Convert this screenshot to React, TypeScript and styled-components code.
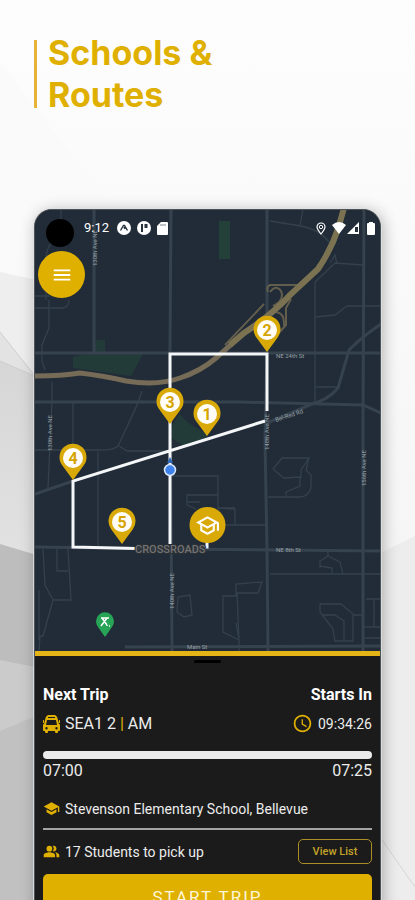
import React from "react";
import styled, { createGlobalStyle } from "styled-components";
import { MdSchool, MdOutlineSchool, MdPeopleAlt, MdAccessTime, MdMenu } from "react-icons/md";

const gold = "#e0b000";

const GlobalStyle = createGlobalStyle`
  * { box-sizing: border-box; }
  body { margin: 0; background: #fafafa; font-family: Roboto, "Liberation Sans", sans-serif; }
  button { font-family: inherit; cursor: pointer; }
`;

const Page = styled.main`
  position: relative;
  height: 100vh;
  overflow: hidden;
  padding: 32px 34px 0;
`;

const Backdrop = styled.svg`
  position: absolute;
  inset: 0;
  width: 100%;
  height: 100%;
`;

const Heading = styled.h1`
  position: relative;
  display: flex;
  align-items: center;
  gap: 11px;
  margin: 0 0 93px;
  color: ${gold};
  font: 700 34px/42px Inter, "Open Sans", sans-serif;

  &::before {
    content: "";
    width: 3px;
    height: 68px;
    background: #e6b238;
  }
`;

const Phone = styled.section`
  position: relative;
  overflow: hidden;
  border: 1px solid #4c5359;
  border-bottom: 0;
  border-radius: 18px 18px 0 0;
  background: #1b1b1b;
  box-shadow: 0 0 0 1px rgba(225, 225, 225, 0.8), 2px 2px 16px rgba(0, 0, 0, 0.3);
`;

const MapArea = styled.div`
  position: relative;
  border-bottom: 5px solid #e5b416;
`;

const MapDrawing = styled.svg`
  display: block;
  width: 100%;
  height: auto;
  background: #212c38;
`;

const StatusBar = styled.div`
  position: absolute;
  top: 4px;
  left: 11px;
  right: 5px;
  display: flex;
  align-items: center;
  justify-content: space-between;
  color: #fff;
`;

const StatusGroup = styled.div<{ $gap: number }>`
  display: flex;
  align-items: center;
  gap: ${(p) => p.$gap}px;
  height: 28px;

  svg { display: block; }
`;

const Camera = styled.span`
  width: 28px;
  height: 28px;
  margin: 10px 4px 0 0;
  border-radius: 50%;
  background: #000;
`;

const Time = styled.time`
  margin-right: 2px;
  font-size: 13px;
  line-height: 16px;
`;

const MenuButton = styled.button`
  position: absolute;
  top: 41px;
  left: 3px;
  display: grid;
  place-items: center;
  width: 47px;
  height: 47px;
  padding: 0;
  border: 0;
  border-radius: 50%;
  background: ${gold};
  color: #fff;
  font-size: 22px;
`;

const Panel = styled.div`
  display: flex;
  flex-direction: column;
  padding: 4px 8px 20px;
  color: #ececec;
  font-size: 16px;
  line-height: 20px;
`;

const Handle = styled.span`
  align-self: center;
  width: 27px;
  height: 3px;
  margin-bottom: 22px;
  border-radius: 2px;
  background: #000;
`;

const Row = styled.div<{ $gap?: number }>`
  display: flex;
  align-items: center;
  justify-content: space-between;
  margin-bottom: ${(p) => p.$gap ?? 0}px;
`;

const Title = styled.h2`
  margin: 0;
  color: #fff;
  font-size: 16px;
  line-height: 20px;
`;

const Detail = styled.span<{ $size?: number }>`
  display: flex;
  align-items: center;
  gap: 5px;
  height: 21px;
  font-size: ${(p) => p.$size ?? 16}px;
  white-space: pre;

  svg { flex: none; color: ${gold}; }
`;

const Pipe = styled.span`
  color: ${gold};
`;

const Progress = styled.div`
  height: 8px;
  margin-bottom: 2px;
  border-radius: 4px;
  background: #ececec;
`;

const Divider = styled.hr`
  width: 100%;
  height: 2px;
  margin: 0 0 9px;
  border: 0;
  background: #a3a3a3;
`;

const ViewButton = styled.button`
  width: 74px;
  height: 25px;
  padding: 0;
  border: 1px solid #a98d26;
  border-radius: 5px;
  background: transparent;
  color: #c4a32a;
  font-size: 11px;
  font-weight: 500;
`;

const StartButton = styled.button`
  height: 46px;
  padding: 0;
  border: 0;
  border-radius: 5px;
  background: ${gold};
  color: #fff6d8;
  font-size: 17px;
  letter-spacing: 2px;
`;

const MapLabel = styled.text`
  fill: #98a0a6;
  font: 6px Roboto, sans-serif;
`;

const CrossroadsLabel = styled.text`
  fill: #737271;
  stroke: #2b3138;
  stroke-width: 2px;
  paint-order: stroke;
  font: 500 11px Roboto, sans-serif;
`;

const PinNumber = styled.text`
  fill: #d6a400;
  font: 700 16px Roboto, sans-serif;
  text-anchor: middle;
`;

const stops = [
  { n: 2, x: 267, y: 352 },
  { n: 3, x: 170, y: 424 },
  { n: 1, x: 207, y: 436 },
  { n: 4, x: 73, y: 480 },
  { n: 5, x: 122, y: 544 },
];

const mainRoads = [
  "M94 209V353M171 209L170 353L172 651M267 209V353L265 440L267 549L268 651M364 209L363 420V651",
  "M35 353H381M35 402L240 402L363 405L381 413M35 547L172 549L381 551M125 647L381 646",
  "M35 494L73 481M267 423L312 404Q328 400 338 388L349 350Q362 337 381 324",
];

const minorRoads = [
  "M61 209V230Q48 243 46 256V300M35 296H50M35 308H63Q69 307 69 300M49 300V328L42 345V361L45 370",
  "M52 382V401L48 488M73 402V448M98 452V547M35 450H98Q112 451 118 446L138 403L142 391M119 446L127 451H170",
  "M270 221L301 226Q326 231 333 250M300 226L303 209M315 282L335 263L363 265M315 282V403M315 317L335 315L347 306H381M315 387H340M330 263L335 255L337 264",
  "M273 469L282 458H309L306 470L311 475V488Q308 497 300 497H268M273 469L284 478L300 477V486L286 492V497M309 458L301 470V478",
  "M170 476H218V508H235M218 495H187V502H200M218 508L235 509V525H266M187 495V505L196 509",
  "M43 549L45 585L53 600L43 636H40L39 651M68 549L71 600H53M57 549V571H68M39 590V640",
  "M270 574H381M320 568V561L328 556L340 562L343 574M320 566L332 568V574M328 556V551",
  "M223 596H236V584L262 582L258 593H237L239 640L223 632ZM236 623L239 640V651M178 597L190 595L192 615L184 617L177 612Z",
  "M320 604H341L353 614V641H335L333 629L320 612ZM323 615H335L344 621V641M353 615H363M366 599H381M374 599V627M364 627H381M364 638H381M235 525H225L218 508",
];

function WorldMap() {
  return (
    <MapDrawing viewBox="35 210 345 441" role="img" aria-label="Route map">
      <g fill="#234039">
        <path d="M219 221H230V259H219Z" />
        <path d="M73 357L92 352L96 340H105V352L143 354L131 376L96 371L73 368Z" opacity=".75" />
        <path d="M179 414L190 424L207 434V439L184 446L172 438V426Z" opacity=".7" />
      </g>
      <g fill="none" stroke="#34404b" strokeWidth="1.3">
        {minorRoads.map((d) => <path key={d} d={d} />)}
      </g>
      <g fill="none" stroke="#36434e" strokeWidth="3">
        {mainRoads.map((d) => <path key={d} d={d} />)}
      </g>
      <g fill="none" stroke="#625d4c" strokeWidth="2">
        <path d="M268 292Q266 287 270 285H297M270 292Q276 284 281 291Q285 300 273 306M291 299L286 308V325L277 335M276 312Q285 313 284 326M225 345L264 304" />
      </g>
      <path
        d="M34 376Q62 376 80 373Q105 376 126 381Q158 386 180 378Q201 371 216 358L244 333Q273 314 291 294L318 269Q331 250 338 229L344 208"
        fill="none" stroke="#766b56" strokeWidth="5"
      />
      <path d="M230 345L244 333Q273 314 291 294L318 269Q331 250 338 229L344 208" fill="none" stroke="#7a7251" strokeWidth="6" />

      <MapLabel transform="translate(97 266) rotate(-90)">130th Ave NE</MapLabel>
      <MapLabel transform="translate(52 451) rotate(-90)">130th Ave NE</MapLabel>
      <MapLabel transform="translate(174 609) rotate(-90)">140th Ave NE</MapLabel>
      <MapLabel transform="translate(366 486) rotate(-90)">156th Ave NE</MapLabel>
      <MapLabel x="276" y="358">NE 24th St</MapLabel>
      <MapLabel x="276" y="552">NE 8th St</MapLabel>
      <MapLabel x="187" y="649">Main St</MapLabel>
      <MapLabel transform="translate(276 422) rotate(-18)">Bel-Red Rd</MapLabel>

      <path
        d="M267 411V354H170V544M265 421L73 481V547L136 548.5M207 538V547H202"
        fill="none" stroke="#f4f6f8" strokeWidth="3"
      />
      <MapLabel transform="translate(269 450) rotate(-90)">148th Ave NE</MapLabel>
      <CrossroadsLabel x="135" y="553">CROSSROADS</CrossroadsLabel>

      <circle cx="170" cy="470" r="5.5" fill="#3f83ea" stroke="#dbe8fb" strokeWidth="1.5" />
      <path d="M167 463L170 457L173 463Z" fill="#2f68b8" />

      {stops.map((s) => (
        <g key={s.n} transform={`translate(${s.x} ${s.y})`}>
          <path d="M0 0L-11 -15A13.5 13.5 0 1 1 11 -15Z" fill="#d9a908" />
          <circle cy="-22" r="10" fill="#fffdf5" />
          <PinNumber y="-16">{s.n}</PinNumber>
        </g>
      ))}

      <circle cx="207.5" cy="525" r="18" fill="#d9a908" />
      <MdOutlineSchool x={195} y={513} size={25} color="#fff" />

      <g transform="translate(105 637)">
        <path d="M0 0L-7 -10A9 9 0 1 1 7 -10Z" fill="#27a456" />
        <path d="M-4 -19H4M-3 -19L2 -12M2 -19L-4 -11M2 -12V-11M5 -11H4" fill="none" stroke="#fff" strokeWidth="1.5" />
      </g>
    </MapDrawing>
  );
}

function BusIcon() {
  return (
    <svg width="17" height="18" viewBox="0 0 17 18" fill="currentColor" aria-hidden="true">
      <path
        fillRule="evenodd"
        d="M5 0H12Q14 1 14.500 3L16 9Q17 9 17 10V15Q17 16 16 16H15V17Q15 18 14 18H13Q12 18 12 17V16H5V17Q5 18 4 18H3Q2 18 2 17V16H1Q0 16 0 15V10Q0 9 1 9L2.500 3Q3 1 5 0ZM5 2V3H12V2ZM4 5L3 10H14L13 5ZM3.500 12A1.200 1.200 0 1 0 3.500 14.400A1.200 1.200 0 1 0 3.500 12ZM13.500 12A1.200 1.200 0 1 0 13.500 14.400A1.200 1.200 0 1 0 13.500 12Z"
      />
      <path d="M0 5H1V8H0ZM16 5H17V8H16Z" />
    </svg>
  );
}

function AppDots() {
  return (
    <>
      <svg width="14" height="14" viewBox="0 0 14 14">
        <circle cx="7" cy="7" r="7" fill="#fff" />
        <path d="M3.5 9.5L6.5 4.5H7.5L10.5 9.5M7 6L8 8" fill="none" stroke="#26313b" strokeWidth="1.4" />
      </svg>
      <svg width="14" height="14" viewBox="0 0 14 14">
        <circle cx="7" cy="7" r="7" fill="#fff" />
        <path d="M4 3H6V11H4ZM7.5 3H10.5V7H7.5Z" fill="#26313b" />
      </svg>
      <svg width="11" height="13" viewBox="0 0 11 13">
        <path d="M4 0H10Q11 0 11 1V12Q11 13 10 13H1Q0 13 0 12V4Z" fill="#fff" />
        <path d="M4 2V4M6 2V4M8 2V4" stroke="#7c858b" />
      </svg>
    </>
  );
}

function SystemIcons() {
  return (
    <>
      <svg width="10" height="13" viewBox="0 0 10 13">
        <path d="M5 12Q1 7 1 5A4 4 0 0 1 9 5Q9 7 5 12Z" fill="none" stroke="#fff" strokeWidth="1.2" />
        <circle cx="5" cy="5" r="1.7" fill="none" stroke="#fff" />
      </svg>
      <svg width="29" height="12" viewBox="0 0 29 12">
        <path d="M0 3Q7 -3 14 3L7 12Z" fill="#fff" />
        <path d="M15 12L27 0V12Z" fill="#fff" />
        <path d="M23 5H26V10H23Z" fill="#26313b" />
      </svg>
      <svg width="8" height="13" viewBox="0 0 8 13">
        <path d="M2 1V0H6V1H7Q8 1 8 2V12Q8 13 7 13H1Q0 13 0 12V2Q0 1 1 1Z" fill="#fff" />
      </svg>
    </>
  );
}

export default function App() {
  return (
    <>
      <GlobalStyle />
      <Page>
        <Backdrop viewBox="0 0 415 900" preserveAspectRatio="none" aria-hidden="true">
          <defs>
            <linearGradient id="fade" x1="0" y1="0" x2="0" y2="1">
              <stop offset="0" stopColor="#fdfdfd" />
              <stop offset="1" stopColor="#f1f1f1" />
            </linearGradient>
            <linearGradient id="slope" x1="0" y1="0" x2="0" y2="1">
              <stop offset="0" stopColor="#d6d6d6" />
              <stop offset="1" stopColor="#e2e2e2" />
            </linearGradient>
          </defs>
          <rect width="415" height="900" fill="url(#fade)" />
          <path d="M0 62L110 205H0Z" fill="#fafafa" />
          <path d="M0 272L60 285V400L0 361Z" fill="#eeeeee" />
          <path d="M0 332L35 376L0 361Z" fill="#e3e3e3" />
          <path d="M0 361L35 376H60V560H0Z" fill="url(#slope)" />
          <path d="M0 544L60 562V680H0Z" fill="#bdbdbd" />
          <path d="M0 660L60 672V740H0Z" fill="#cbcbcb" />
          <path d="M0 731L60 706V900H0Z" fill="#c1c1c1" />
          <path d="M370 558L415 536V900H370Z" fill="#ededed" />
          <path d="M0 332L35 376M0 361L35 376" stroke="#cfcfcf" fill="none" />
          <path d="M382 840L415 887" stroke="#d5d5d5" fill="none" />
        </Backdrop>

        <Heading>
          <span>Schools &amp;<br />Routes</span>
        </Heading>

        <Phone>
          <MapArea>
            <WorldMap />
            <StatusBar>
              <StatusGroup $gap={6}>
                <Camera />
                <Time>9:12</Time>
                <AppDots />
              </StatusGroup>
              <StatusGroup $gap={6}>
                <SystemIcons />
              </StatusGroup>
            </StatusBar>
            <MenuButton aria-label="Open menu"><MdMenu /></MenuButton>
          </MapArea>

          <Panel>
            <Handle />
            <Row $gap={8}>
              <Title>Next Trip</Title>
              <Title>Starts In</Title>
            </Row>
            <Row $gap={17}>
              <Detail><BusIcon /><span>SEA1 2 <Pipe>|</Pipe> AM</span></Detail>
              <Detail $size={14}><MdAccessTime size={21} />09:34:26</Detail>
            </Row>
            <Progress role="progressbar" aria-label="Trip progress" aria-valuenow={0} />
            <Row $gap={17}>
              <span>07:00</span>
              <span>07:25</span>
            </Row>
            <Row $gap={9}>
              <Detail $size={14}><MdSchool size={17} />Stevenson Elementary School, Bellevue</Detail>
            </Row>
            <Divider />
            <Row $gap={10}>
              <Detail $size={14}><MdPeopleAlt size={17} />17 Students to pick up</Detail>
              <ViewButton>View List</ViewButton>
            </Row>
            <StartButton>START TRIP</StartButton>
          </Panel>
        </Phone>
      </Page>
    </>
  );
}
